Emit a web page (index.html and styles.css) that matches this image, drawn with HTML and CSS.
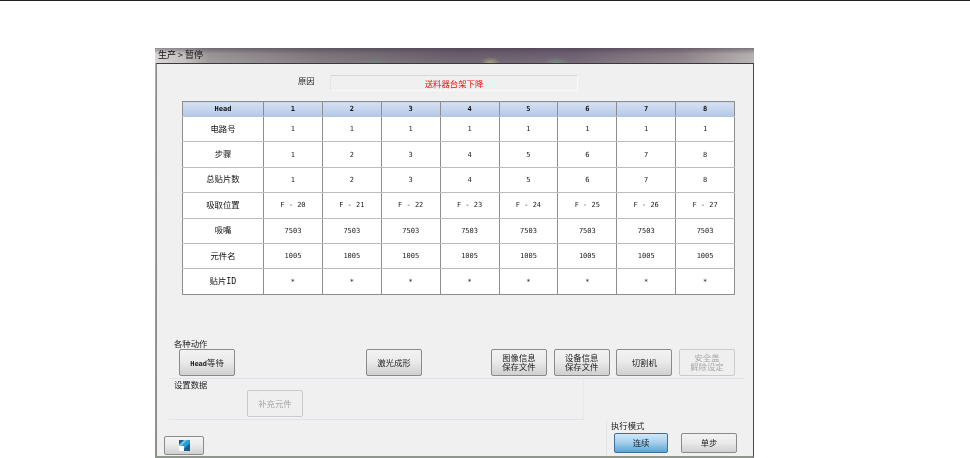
FILE: index.html
```html
<!DOCTYPE html>
<html lang="zh">
<head>
<meta charset="utf-8">
<title>生产 &gt; 暂停</title>
<link rel="stylesheet" href="styles.css">
</head>
<body>
<div class="top-line"></div>
<main class="window">
  <header class="title-bar">生产 &gt; 暂停</header>
  <div class="pane">
    <div class="reason-row">
      <span class="reason-label">原因</span>
      <div class="reason-box">送料器台架下降</div>
    </div>
    <table class="grid">
      <thead>
        <tr><th class="head-col">Head</th><th>1</th><th>2</th><th>3</th><th>4</th><th>5</th><th>6</th><th>7</th><th>8</th></tr>
      </thead>
      <tbody>
        <tr><th>电路号</th><td>1</td><td>1</td><td>1</td><td>1</td><td>1</td><td>1</td><td>1</td><td>1</td></tr>
        <tr><th>步骤</th><td>1</td><td>2</td><td>3</td><td>4</td><td>5</td><td>6</td><td>7</td><td>8</td></tr>
        <tr><th>总贴片数</th><td>1</td><td>2</td><td>3</td><td>4</td><td>5</td><td>6</td><td>7</td><td>8</td></tr>
        <tr><th>吸取位置</th><td>F - 20</td><td>F - 21</td><td>F - 22</td><td>F - 23</td><td>F - 24</td><td>F - 25</td><td>F - 26</td><td>F - 27</td></tr>
        <tr><th>吸嘴</th><td>7503</td><td>7503</td><td>7503</td><td>7503</td><td>7503</td><td>7503</td><td>7503</td><td>7503</td></tr>
        <tr><th>元件名</th><td>1005</td><td>1005</td><td>1005</td><td>1005</td><td>1005</td><td>1005</td><td>1005</td><td>1005</td></tr>
        <tr><th>贴片ID</th><td>*</td><td>*</td><td>*</td><td>*</td><td>*</td><td>*</td><td>*</td><td>*</td></tr>
      </tbody>
    </table>

    <section class="actions">
      <div class="legend">各种动作</div>
      <div class="action-row">
        <button class="btn btn-head"><span class="mono">Head</span>等待</button>
        <button class="btn btn-laser">激光成形</button>
        <div class="action-right">
          <button class="btn">图像信息<br>保存文件</button>
          <button class="btn">设备信息<br>保存文件</button>
          <button class="btn">切割机</button>
          <button class="btn is-disabled">安全盖<br>解除设定</button>
        </div>
      </div>
    </section>

    <section class="settings">
      <div class="legend">设置数据</div>
      <button class="btn btn-refill is-disabled">补充元件</button>
    </section>

    <footer class="footer">
      <button class="btn btn-icon" aria-label="窗口">
        <svg class="icon" viewBox="0 0 11 11" width="11" height="11">
          <rect width="11" height="11" fill="#16608f"/>
          <path d="M0 7L7 0H11V3L3 11H0Z" fill="#2f9ad6"/>
          <path d="M5 0H8L0 8V5Z" fill="#7cc6ee"/>
          <rect y="6" width="5" height="5" fill="#fff"/>
        </svg>
      </button>
      <div class="mode">
        <div class="legend">执行模式</div>
        <div class="mode-row">
          <button class="btn btn-mode is-active">连续</button>
          <button class="btn btn-mode">单步</button>
        </div>
      </div>
    </footer>
  </div>
</main>
</body>
</html>
```
FILE: styles.css
```css
* { box-sizing: border-box; }
html, body { margin: 0; padding: 0; height: 100%; overflow: hidden; background: #fff; }
body { font-family: "Noto Sans CJK SC", "Liberation Sans", sans-serif; font-size: 8.4px; color: #111; }

.top-line { height: 1px; background: #222; }

.window {
  width: 599px;
  height: 410px;
  margin: 47px 0 0 155px;
  background: linear-gradient(180deg, #b9a7a7, #a09a9c 60%, #8d9488);
  filter: blur(0.3px);
}

.title-bar {
  height: 15px;
  padding: 1px 0 0 3px;
  line-height: 11px;
  font-size: 9px;
  color: #111;
  background:
    linear-gradient(180deg, rgba(60, 50, 70, 0.45), rgba(255, 255, 255, 0) 40%, rgba(255, 255, 255, 0.08)),
    radial-gradient(ellipse 12px 5px at 37% 95%, #66776a, transparent),
    radial-gradient(ellipse 10px 6px at 56% 100%, #a09c70, transparent),
    radial-gradient(ellipse 12px 6px at 67% 100%, #6e8478, transparent),
    linear-gradient(90deg, #d8d4d3 0, #c2bdbc 5%, #9a9395 9%, #7a7278 28%, #675c6a 50%, #6c5f70 70%, #8a7f86 88%, #b5afae 100%);
}

.pane {
  height: 395px;
  margin-left: 1px;
  padding-top: 11px;
  background: #f0f0f0;
  border-top: 1px solid #3a3a3a;
  border-left: 1px solid #8c8c8c;
  border-right: 1px solid #4a4a4a;
  border-bottom: 2px solid #8f978c;
  overflow: hidden;
}

.reason-row { display: flex; height: 16px; padding-left: 141px; }
.reason-label { width: 32px; height: 10px; line-height: 10px; color: #222; }
.reason-box {
  width: 248px;
  height: 16px;
  line-height: 14px;
  text-align: center;
  color: #f01010;
  background: #f0f0f0;
  border: 1px solid #f8f8f8;
  border-top-color: #d8d8d8;
  border-left-color: #e4e4e4;
}

.grid {
  width: 553px;
  margin: 10px 0 0 25px;
  table-layout: fixed;
  border-collapse: collapse;
  background: #fff;
  font-family: "DejaVu Sans Mono", monospace;
  font-size: 7px;
  border: 1px solid #8e8e8e;
}
.grid th, .grid td {
  padding: 0;
  text-align: center;
  vertical-align: middle;
  font-weight: normal;
  color: #222;
  border-top: 1px solid #bcbcbc;
  border-bottom: 1px solid #bcbcbc;
  border-left: 1px solid #8e8e8e;
  border-right: 1px solid #8e8e8e;
}
.grid th:first-child { width: 81px; }
.grid thead tr { height: 15px; }
.grid thead th {
  font-weight: bold;
  color: #111;
  background: linear-gradient(180deg, #d6e1f3, #b3c8e6);
  border-top-color: #8e8e8e;
  border-bottom-color: #b6c4d8;
}
.grid tbody tr { height: 25.4px; }
.grid tbody th {
  padding-bottom: 3px;
  font-family: "DejaVu Sans Mono", "Noto Sans CJK SC", monospace;
  font-size: 8.4px;
  color: #111;
}
.grid tbody tr:last-child th, .grid tbody tr:last-child td { border-bottom-color: #8e8e8e; }

.legend { height: 10px; line-height: 10px; color: #222; }

.btn {
  display: block;
  width: 56px;
  height: 27px;
  padding: 0;
  font: inherit;
  line-height: 9px;
  color: #222;
  background: linear-gradient(180deg, #f2f2f2 0, #ebebeb 45%, #d0d0d0 100%);
  border: 1px solid #8a8a8a;
  border-radius: 2px;
}
.btn.is-disabled {
  color: #a8a8a8;
  background: #efefef;
  border-color: #cacaca;
}

.btn-head { padding-top: 2px; }
.mono { font-family: "DejaVu Sans Mono", monospace; font-size: 7px; font-weight: bold; }

.actions { margin: 43px 8px 0 12px; padding-bottom: 2px; border-bottom: 1px solid #dce3ea; }
.actions .legend { padding-left: 5px; }
.action-row { display: flex; margin-top: 1px; padding-left: 10px; }
.btn-laser { margin-left: 131px; }
.action-right { display: flex; gap: 6.67px; margin-left: 69px; }

.settings { width: 415px; height: 41px; margin-left: 12px; border-bottom: 1px solid #dce3ea; border-right: 1px solid #e6eaee; }
.settings .legend { padding-left: 5px; }
.btn-refill { margin: 1px 0 0 78px; }

.footer { display: flex; justify-content: space-between; height: 36px; padding: 0 8px 0 7px; }
.btn-icon {
  display: flex;
  align-items: center;
  justify-content: center;
  width: 40px;
  height: 19px;
  margin-top: 16px;
  background: linear-gradient(180deg, #f4f4f4 0, #ececec 45%, #cfcfcf 100%);
}
.icon { display: block; }

.mode { width: 139px; border-left: 1px solid #e6e6e6; }
.mode .legend { padding-left: 4px; }
.mode-row { display: flex; gap: 13px; margin-top: 3px; padding-left: 7px; }
.btn-mode { width: 54px; height: 20px; }
.btn-mode + .btn-mode { width: 56px; }
.is-active {
  color: #123;
  background: linear-gradient(180deg, #d3e7f6 0, #a9d0ec 45%, #5ba6d6 100%);
  border-color: #3f6f96;
}
```
